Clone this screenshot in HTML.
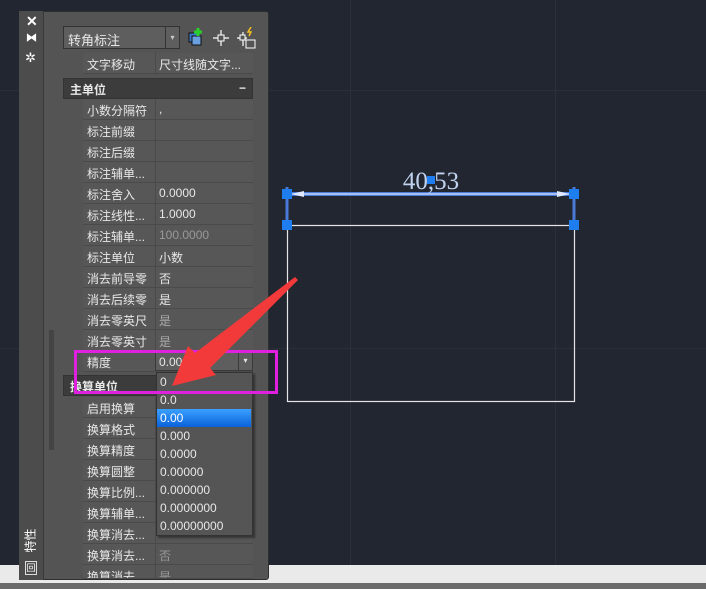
<!DOCTYPE html><html><head><meta charset="utf-8"><style>
*{margin:0;padding:0;box-sizing:border-box}
body{width:706px;height:589px;background:#222630;position:relative;overflow:hidden;font-family:"Liberation Sans","Noto Sans CJK SC",sans-serif;font-size:12px;color:#e8e8e8}
.a{position:absolute}
.row{position:absolute;left:83px;width:170px;height:21px;border-bottom:1px solid #4a4a4a;background:#575757}
.row .l{position:absolute;left:4px;top:3px;width:68px;white-space:nowrap;overflow:hidden}
.row .v{position:absolute;left:72px;top:0;height:20px;width:98px;border-left:1px solid #4a4a4a;padding:3px 3px}
.hd{position:absolute;left:63px;width:190px;height:21px;background:#3c3c3c;border:1px solid #333;font-weight:bold;padding:2px 6px}
.dd{position:absolute;left:157px;width:94px;height:18px;padding:2px 3px;font-size:12px}
</style></head><body>
<svg class="a" style="left:0;top:0" width="706" height="589">
<g stroke="#2a2f38" stroke-width="1"><line x1="350.5" y1="0" x2="350.5" y2="565"/><line x1="555.5" y1="0" x2="555.5" y2="565"/><line x1="0" y1="90.5" x2="706" y2="90.5"/><line x1="0" y1="348.5" x2="706" y2="348.5"/></g>
<rect x="287.5" y="225.5" width="287" height="176" fill="none" stroke="#e6e6e6" stroke-width="1.2"/>
<line x1="287" y1="194" x2="574" y2="194" stroke="#4a7ad8" stroke-width="4"/>
<line x1="292" y1="194" x2="569" y2="194" stroke="#dfe8ff" stroke-width="1.3"/>
<line x1="287" y1="187" x2="287" y2="225" stroke="#4a7ad8" stroke-width="3"/>
<line x1="574" y1="187" x2="574" y2="225" stroke="#4a7ad8" stroke-width="3"/>
<path d="M291 194 L304 191 L304 197Z M570 194 L557 191 L557 197Z" fill="#dfe8ff"/>
<text x="431" y="189" text-anchor="middle" font-family="Liberation Serif,serif" font-size="25" fill="#c0d2f0">40,53</text>
<g fill="#1e7ef0"><rect x="282" y="189" width="10" height="10"/><rect x="569" y="189" width="10" height="10"/><rect x="282" y="220" width="10" height="10"/><rect x="569" y="220" width="10" height="10"/><rect x="427" y="176" width="8" height="8"/></g>
<rect x="0" y="565" width="706" height="18" fill="#eaeaea"/><rect x="0" y="583" width="706" height="6" fill="#6a6a6a"/>
</svg>
<div class="a" style="left:19px;top:11px;width:250px;height:569px;background:#545454;border:1px solid #2e2e2e;border-radius:3px"></div>
<div class="a" style="left:19px;top:11px;width:25px;height:569px;background:#4c4c4c;border-right:1px solid #3a3a3a"></div>
<div class="a" style="left:26px;top:13px;font-size:14px;font-weight:bold;color:#fff">✕</div>
<div class="a" style="left:26px;top:31px;font-size:11px;font-weight:bold;color:#fff">⧓</div>
<div class="a" style="left:25px;top:50px;font-size:13px;color:#fff">✲</div>
<div class="a" style="left:16px;top:532px;font-size:12px;color:#fff;transform:rotate(-90deg);width:28px;text-align:center">特性</div>
<div class="a" style="left:25px;top:561px;width:12px;height:14px;border:1px solid #ddd;font-size:9px;color:#fff;text-align:center;line-height:12px">回</div>
<div class="a" style="left:49px;top:330px;width:5px;height:120px;background:#444"></div>
<div class="a" style="left:63px;top:26px;width:117px;height:23px;background:#5e5e5e;border:1px solid #333;padding:3px 4px;font-size:13px">转角标注</div>
<div class="a" style="left:165px;top:27px;width:14px;height:21px;border-left:1px solid #333;color:#ccc;font-size:8px;text-align:center;line-height:21px">▾</div>
<svg class="a" style="left:187px;top:27px" width="72" height="24">
<rect x="2" y="6" width="9" height="9" fill="#3a78c8" stroke="#111"/><rect x="5" y="9" width="9" height="9" fill="#6aa0e0" stroke="#111"/><path d="M11 1v8M7 5h8" stroke="#2ad02a" stroke-width="3"/>
<path d="M34 3v16M26 11h16" stroke="#fff" stroke-width="1.2"/><rect x="31" y="8" width="6" height="6" fill="#545454" stroke="#fff"/>
<path d="M56 5v14M50 11h10" stroke="#fff" stroke-width="1.2"/><rect x="53" y="8" width="5" height="5" fill="#545454" stroke="#fff"/><rect x="59" y="13" width="9" height="8" fill="none" stroke="#fff"/><path d="M64 0l-3 5h3l-2 4" stroke="#f4c020" stroke-width="1.5" fill="none"/>
</svg>
<div class="row" style="top:53px"><div class="l">文字移动</div><div class="v">尺寸线随文字...</div></div>
<div class="hd" style="top:78px">主单位<span style="float:right">−</span></div>
<div class="row" style="top:99px"><div class="l">小数分隔符</div><div class="v">,</div></div>
<div class="row" style="top:120px"><div class="l">标注前缀</div><div class="v"></div></div>
<div class="row" style="top:141px"><div class="l">标注后缀</div><div class="v"></div></div>
<div class="row" style="top:162px"><div class="l">标注辅单...</div><div class="v"></div></div>
<div class="row" style="top:183px"><div class="l">标注舍入</div><div class="v">0.0000</div></div>
<div class="row" style="top:204px"><div class="l">标注线性...</div><div class="v">1.0000</div></div>
<div class="row" style="top:225px"><div class="l">标注辅单...</div><div class="v" style="color:#999">100.0000</div></div>
<div class="row" style="top:246px"><div class="l">标注单位</div><div class="v">小数</div></div>
<div class="row" style="top:267px"><div class="l">消去前导零</div><div class="v">否</div></div>
<div class="row" style="top:288px"><div class="l">消去后续零</div><div class="v">是</div></div>
<div class="row" style="top:309px"><div class="l">消去零英尺</div><div class="v" style="color:#aaa">是</div></div>
<div class="row" style="top:330px"><div class="l">消去零英寸</div><div class="v" style="color:#aaa">是</div></div>
<div class="row" style="top:351px"><div class="l">精度</div><div class="v" style="background:#5e5e5e;border:1px solid #3a3a3a">0.00<span style="position:absolute;right:0;top:0;width:14px;height:18px;border-left:1px solid #3a3a3a;font-size:8px;text-align:center;line-height:18px">▾</span></div></div>
<div class="hd" style="top:375px">换算单位</div>
<div class="row" style="top:397px"><div class="l">启用换算</div><div class="v"></div></div>
<div class="row" style="top:418px"><div class="l">换算格式</div><div class="v"></div></div>
<div class="row" style="top:439px"><div class="l">换算精度</div><div class="v"></div></div>
<div class="row" style="top:460px"><div class="l">换算圆整</div><div class="v"></div></div>
<div class="row" style="top:481px"><div class="l">换算比例...</div><div class="v"></div></div>
<div class="row" style="top:502px"><div class="l">换算辅单...</div><div class="v"></div></div>
<div class="row" style="top:523px"><div class="l">换算消去...</div><div class="v"></div></div>
<div class="row" style="top:544px"><div class="l">换算消去...</div><div class="v" style="color:#999">否</div></div>
<div class="row" style="top:565px;height:14px;overflow:hidden"><div class="l">换算消去...</div><div class="v" style="color:#999">是</div></div>
<div class="a" style="left:156px;top:372px;width:97px;height:164px;background:#555;border:1px solid #333;box-shadow:2px 2px 2px rgba(0,0,0,.4)"></div>
<div class="dd" style="top:373px">0</div>
<div class="dd" style="top:391px">0.0</div>
<div class="dd" style="top:409px;background:linear-gradient(#3aa0ff,#0a62d8);color:#fff">0.00</div>
<div class="dd" style="top:427px">0.000</div>
<div class="dd" style="top:445px">0.0000</div>
<div class="dd" style="top:463px">0.00000</div>
<div class="dd" style="top:481px">0.000000</div>
<div class="dd" style="top:499px">0.0000000</div>
<div class="dd" style="top:517px">0.00000000</div>
<div class="a" style="left:74px;top:350px;width:204px;height:44px;border:3px solid #e020e0"></div>
<svg class="a" style="left:0;top:0" width="706" height="589">
<path d="M295 277 L298 280 L210 368 L216 375 L172 386 L188 346 L195 353Z" fill="#f23a3a"/>
</svg>
</body></html>
